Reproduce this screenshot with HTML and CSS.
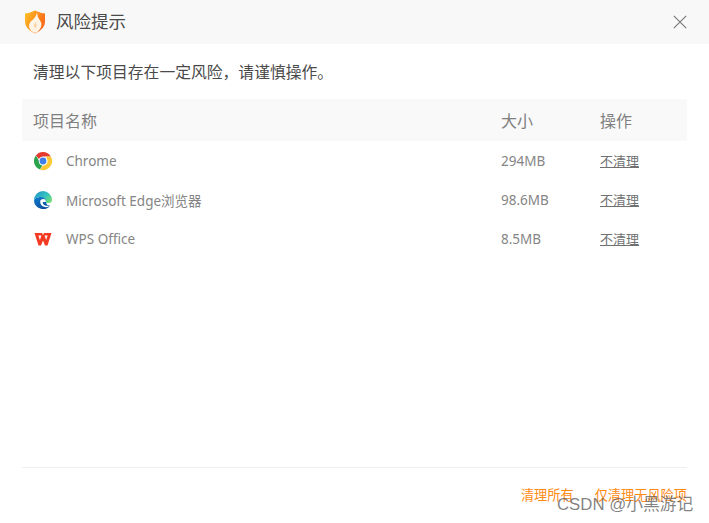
FILE: index.html
```html
<!DOCTYPE html>

<html lang="zh-CN">
  <head>
    <meta charset="utf-8">
    <meta name="viewport" content="width=device-width, initial-scale=1.0">

    <title>风险提示</title>

    <link rel="stylesheet" href="styles.css">
  </head>
  <body>
    <div class="dialog">
      <div class="title-bar">
        <svg class="shield" width="22" height="24" viewBox="0 0 22 24">
          <defs>
            <linearGradient id="shieldFill" x1="0" y1="0" x2="1" y2="0.5">
              <stop offset="0" stop-color="#ffc324"/>
              <stop offset="1" stop-color="#f8681a"/>
            </linearGradient>
          </defs>
          <path d="M1 3.5 Q6 3 11 0.5 Q16 3 21 3.5 V12 Q21 19 11 23.5 Q1 19 1 12 Z" fill="url(#shieldFill)"/>
          <path d="M13 2.5 Q13.2 7 16 10.5 Q18.8 14.5 16 19 Q14 22 11 23 Q6.5 21.5 5.2 17.5 Q4.4 13.5 7.8 10.5 Q11.8 7.5 13 2.5 Z" fill="#fff4e6"/>
          <path d="M11.8 12 Q13.6 15 12 18.5 Q9.8 17.5 10 15.2 Q10.3 13.5 11.8 12 Z" fill="#fcd3a0"/>
        </svg>
        <span class="title">风险提示</span>
        <svg class="close" width="14" height="14" viewBox="0 0 14 14">
          <path d="M0.8 0.8 L13.2 13.2 M13.2 0.8 L0.8 13.2" stroke="#7a7a7a" stroke-width="1.2" fill="none"/>
        </svg>
      </div>

      <p class="notice">清理以下项目存在一定风险，请谨慎操作。</p>

      <div class="table">
        <div class="row head">
          <div class="col-name">项目名称</div>
          <div class="col-size">大小</div>
          <div class="col-action">操作</div>
        </div>
        <div class="row">
          <div class="col-name">
            <svg class="app-icon" width="20" height="20" viewBox="0 0 20 20">
              <path d="M10 1 A9 9 0 0 1 17.8 5.5 L10 5.5 A4.5 4.5 0 0 0 6 8 L2.9 4.4 A9 9 0 0 1 10 1 Z" fill="#e33b2e"/>
              <path d="M2.9 4.4 L6.1 10 A4.5 4.5 0 0 0 9.4 14.5 L7 18.5 A9 9 0 0 1 2.9 4.4 Z" fill="#2ba24c"/>
              <path d="M17.8 5.5 A9 9 0 0 1 7 18.5 L10.2 14.5 A4.5 4.5 0 0 0 13.9 7.7 L13 5.5 Z" fill="#fcc934"/>
              <circle cx="10" cy="10" r="4.3" fill="#fff"/>
              <circle cx="10" cy="10" r="3.4" fill="#3f7ee8"/>
            </svg>
            Chrome
          </div>
          <div class="col-size">294MB</div>
          <div class="col-action"><a class="skip">不清理</a></div>
        </div>
        <div class="row">
          <div class="col-name">
            <svg class="app-icon" width="20" height="20" viewBox="0 0 20 20">
              <defs>
                <linearGradient id="edgeTop" x1="0" y1="0" x2="1" y2="0.7">
                  <stop offset="0" stop-color="#1e8fc9"/>
                  <stop offset="0.6" stop-color="#35c1c0"/>
                  <stop offset="1" stop-color="#6fdc7a"/>
                </linearGradient>
                <linearGradient id="edgeLow" x1="0" y1="0" x2="0.6" y2="1">
                  <stop offset="0" stop-color="#0f7ccf"/>
                  <stop offset="1" stop-color="#0c4f9e"/>
                </linearGradient>
              </defs>
              <path d="M1 10 A9 9 0 0 1 19 10 Q19 13 15.5 13 L11 13 L11 8 L6 7 Q2.5 8 1 10 Z" fill="url(#edgeTop)"/>
              <path d="M1 10 Q2.5 7.5 6.5 7 Q12 6.5 13 11 L13 13 Q14.5 16 17.2 15.4 A9 9 0 0 1 1 10 Z" fill="url(#edgeLow)"/>
              <path d="M7.4 10.2 Q9.6 8.4 11.8 9.2 Q13 10 12.9 12 L9.8 12 Q9.6 14.8 12.4 15.6 Q14.8 16.2 17.2 15.2 Q16 16.4 14.6 17 Q11.6 17.6 9.2 16 Q6.6 13.8 7.4 10.2 Z" fill="#fff"/>
            </svg>
            Microsoft Edge浏览器
          </div>
          <div class="col-size">98.6MB</div>
          <div class="col-action"><a class="skip">不清理</a></div>
        </div>
        <div class="row">
          <div class="col-name">
            <svg class="app-icon" width="20" height="20" viewBox="0 0 20 20">
              <path d="M1.5 4 H9 L10 6 L11 4 H18.5 L14.5 16.5 H12 L10 11.5 L8 16.5 H5.5 Z" fill="#f23a22"/>
              <path d="M5.4 6.4 H8.4 L6.9 11 Z" fill="#fff"/>
              <path d="M11.6 6.4 H14.6 L13.1 11 Z" fill="#fff"/>
            </svg>
            WPS Office
          </div>
          <div class="col-size">8.5MB</div>
          <div class="col-action"><a class="skip">不清理</a></div>
        </div>
      </div>

      <div class="footer">
        <a class="link">清理所有</a>
        <a class="link">仅清理无风险项</a>
      </div>
    </div>

    <div class="watermark">CSDN @小黑游记</div>
  </body>
</html>
```
FILE: styles.css
```css
html, body {
  margin: 0;
  padding: 0;
}
body {
  width: 709px;
  height: 523px;
  background-color: #fff;
  font-family: "Noto Sans", "Noto Sans CJK SC", sans-serif;
  overflow: hidden;
  position: relative;
}

.dialog {
  display: flex;
  flex-direction: column;
  height: 523px;
}

.title-bar {
  display: flex;
  align-items: center;
  height: 44px;
  padding: 0 22px 0 24px;
  background-color: #f8f8f8;
  box-sizing: border-box;
}
.shield {
  margin-right: 10px;
}
.title {
  flex: 1;
  margin-bottom: 3px;
  font-size: 17.5px;
  color: #4a4a4a;
}

.notice {
  margin: 0;
  padding: 17px 0 0 33px;
  height: 55px;
  box-sizing: border-box;
  font-size: 15.8px;
  line-height: 22px;
  color: #4a4a4a;
}

.table {
  margin: 0 22px;
  flex: 1;
}
.row {
  display: flex;
  align-items: center;
  height: 39.2px;
  padding-left: 11px;
  font-size: 13.5px;
  color: #858585;
}
.row.head {
  height: 42px;
  background-color: #f9f9f9;
  font-size: 16px;
  color: #808080;
}
.col-name {
  display: flex;
  align-items: center;
  width: 468px;
}
.col-size {
  width: 99px;
}
.app-icon {
  margin-right: 13px;
}
.skip {
  color: #707070;
  text-decoration: underline;
  font-size: 13px;
}

.footer {
  display: flex;
  justify-content: flex-end;
  gap: 21px;
  margin: 0 22px;
  height: 56px;
  border-top: 1px solid #eeeeee;
  padding-top: 18px;
  box-sizing: border-box;
}
.link {
  color: #ff8a14;
  font-size: 13.2px;
  line-height: 18px;
}

.watermark {
  position: absolute;
  left: 557px;
  top: 495px;
  font-family: "Liberation Sans", "Noto Sans CJK SC", sans-serif;
  font-size: 16.8px;
  line-height: 20px;
  color: rgba(90, 90, 90, 0.75);
  white-space: nowrap;
}
```
